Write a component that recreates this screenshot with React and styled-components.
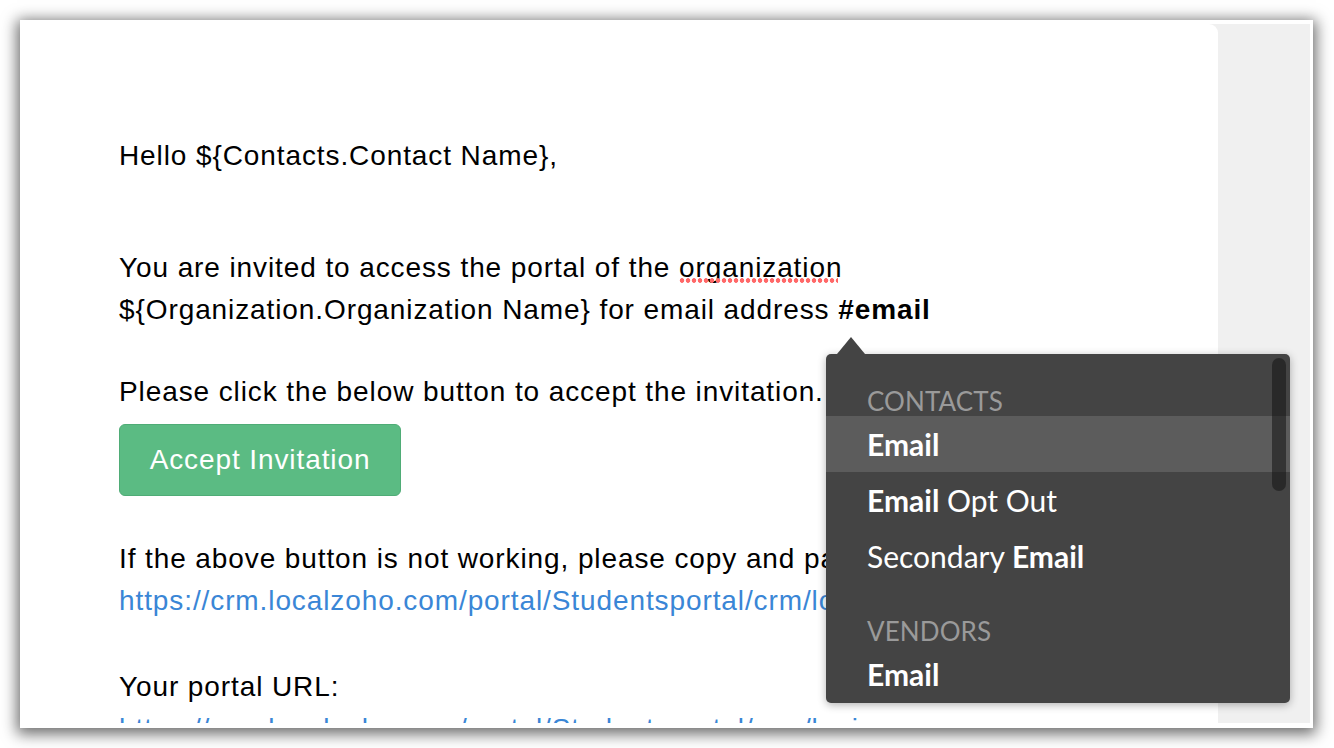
import React from 'react';
import styled, { createGlobalStyle } from 'styled-components';

const GlobalStyle = createGlobalStyle`
  html, body {
    margin: 0;
    padding: 0;
    background: #ffffff;
  }
  body {
    font-family: "Liberation Sans", Arial, Helvetica, sans-serif;
  }
`;

const Page = styled.div`
  width: 1334px;
  height: 748px;
  padding: 20px 0 0 20px;
  box-sizing: border-box;
  overflow: hidden;
`;

const Frame = styled.div`
  position: relative;
  width: 1293px;
  height: 708px;
  box-sizing: border-box;
  padding: 4px 3px 5px 4px;
  background: #ffffff;
  box-shadow: 0 3px 14px 3px rgba(0, 0, 0, 0.58);
  display: flex;
`;

const Body = styled.div`
  flex: 1;
  display: flex;
  background: #f0f0f0;
  overflow: hidden;
`;

const Editor = styled.div`
  flex: 0 0 1194px;
  background: #ffffff;
  border-top-right-radius: 9px;
  overflow: hidden;
  padding: 111px 0 0 95px;
  box-sizing: border-box;
  color: #000;
  font-size: 28px;
  letter-spacing: 0.9px;
`;

const Para = styled.p`
  margin: ${p => p.gap || 0}px 0 0;
  line-height: 42px;
  white-space: nowrap;
`;

const Link = styled.span`
  color: #3a86d6;
`;

const Misspelled = styled.span`
  position: relative;
  &::after {
    content: '';
    position: absolute;
    left: 0;
    right: 4px;
    bottom: 0;
    height: 5px;
    background-image: radial-gradient(circle, #ff6868 2px, transparent 2.6px);
    background-size: 6px 5px;
    background-repeat: repeat-x;
  }
`;

const AcceptButton = styled.div`
  margin-top: 11px;
  width: 282px;
  height: 72px;
  box-sizing: border-box;
  display: flex;
  align-items: center;
  justify-content: center;
  background: #5bbb83;
  border: 1px solid #4fac76;
  border-radius: 6px;
  color: #ffffff;
  font-size: 28px;
`;

const Popup = styled.div`
  position: absolute;
  left: 806px;
  top: 334px;
  width: 464px;
  height: 349px;
  background: #444444;
  border-radius: 5px;
  box-shadow: 0 2px 8px rgba(0, 0, 0, 0.3);
  font-family: Lato, "Noto Sans", sans-serif;
  color: #ffffff;

  &::before {
    content: '';
    position: absolute;
    left: 11px;
    top: -17px;
    border-left: 14.5px solid transparent;
    border-right: 14.5px solid transparent;
    border-bottom: 17px solid #444444;
  }
`;

const List = styled.div`
  height: 100%;
  overflow: hidden;
  border-radius: 5px;
`;

const GroupTitle = styled.div`
  padding: ${p => p.top}px 41px 0;
  line-height: 30px;
  font-size: 26px;
  color: #9a9a9a;
  letter-spacing: 0.1px;
`;

const Item = styled.div`
  height: 56px;
  line-height: 56px;
  padding: 0 41px;
  font-size: 30px;
  background: ${p => (p.active ? '#5c5c5c' : 'transparent')};
  font-weight: 400;
  b {
    font-weight: 700;
  }
`;

const Scrollbar = styled.div`
  position: absolute;
  right: 4px;
  top: 4px;
  width: 14px;
  height: 133px;
  border-radius: 7px;
  background: rgba(20, 20, 20, 0.55);
`;

export default function App() {
  return (
    <>
      <GlobalStyle />
      <Page>
        <Frame>
          <Body>
            <Editor>
              <Para>Hello ${'{'}Contacts.Contact Name{'}'},</Para>
              <Para gap={70}>
                You are invited to access the portal of the <Misspelled>organization</Misspelled>
                <br />
                ${'{'}Organization.Organization Name{'}'} for email address <b>#email</b>
              </Para>
              <Para gap={40}>Please click the below button to accept the invitation.</Para>
              <AcceptButton>Accept Invitation</AcceptButton>
              <Para gap={42}>
                If the above button is not working, please copy and paste the below link in your browser.
                <br />
                <Link>https://crm.localzoho.com/portal/Studentsportal/crm/login</Link>
              </Para>
              <Para gap={44}>
                Your portal URL:
                <br />
                <Link>https://crm.localzoho.com/portal/Studentsportal/crm/login</Link>
              </Para>
            </Editor>
          </Body>
          <Popup>
            <List>
              <GroupTitle top={32}>CONTACTS</GroupTitle>
              <Item active>
                <b>Email</b>
              </Item>
              <Item>
                <b>Email</b> Opt Out
              </Item>
              <Item>
                Secondary <b>Email</b>
              </Item>
              <GroupTitle top={32}>VENDORS</GroupTitle>
              <Item>
                <b>Email</b>
              </Item>
            </List>
            <Scrollbar />
          </Popup>
        </Frame>
      </Page>
    </>
  );
}
